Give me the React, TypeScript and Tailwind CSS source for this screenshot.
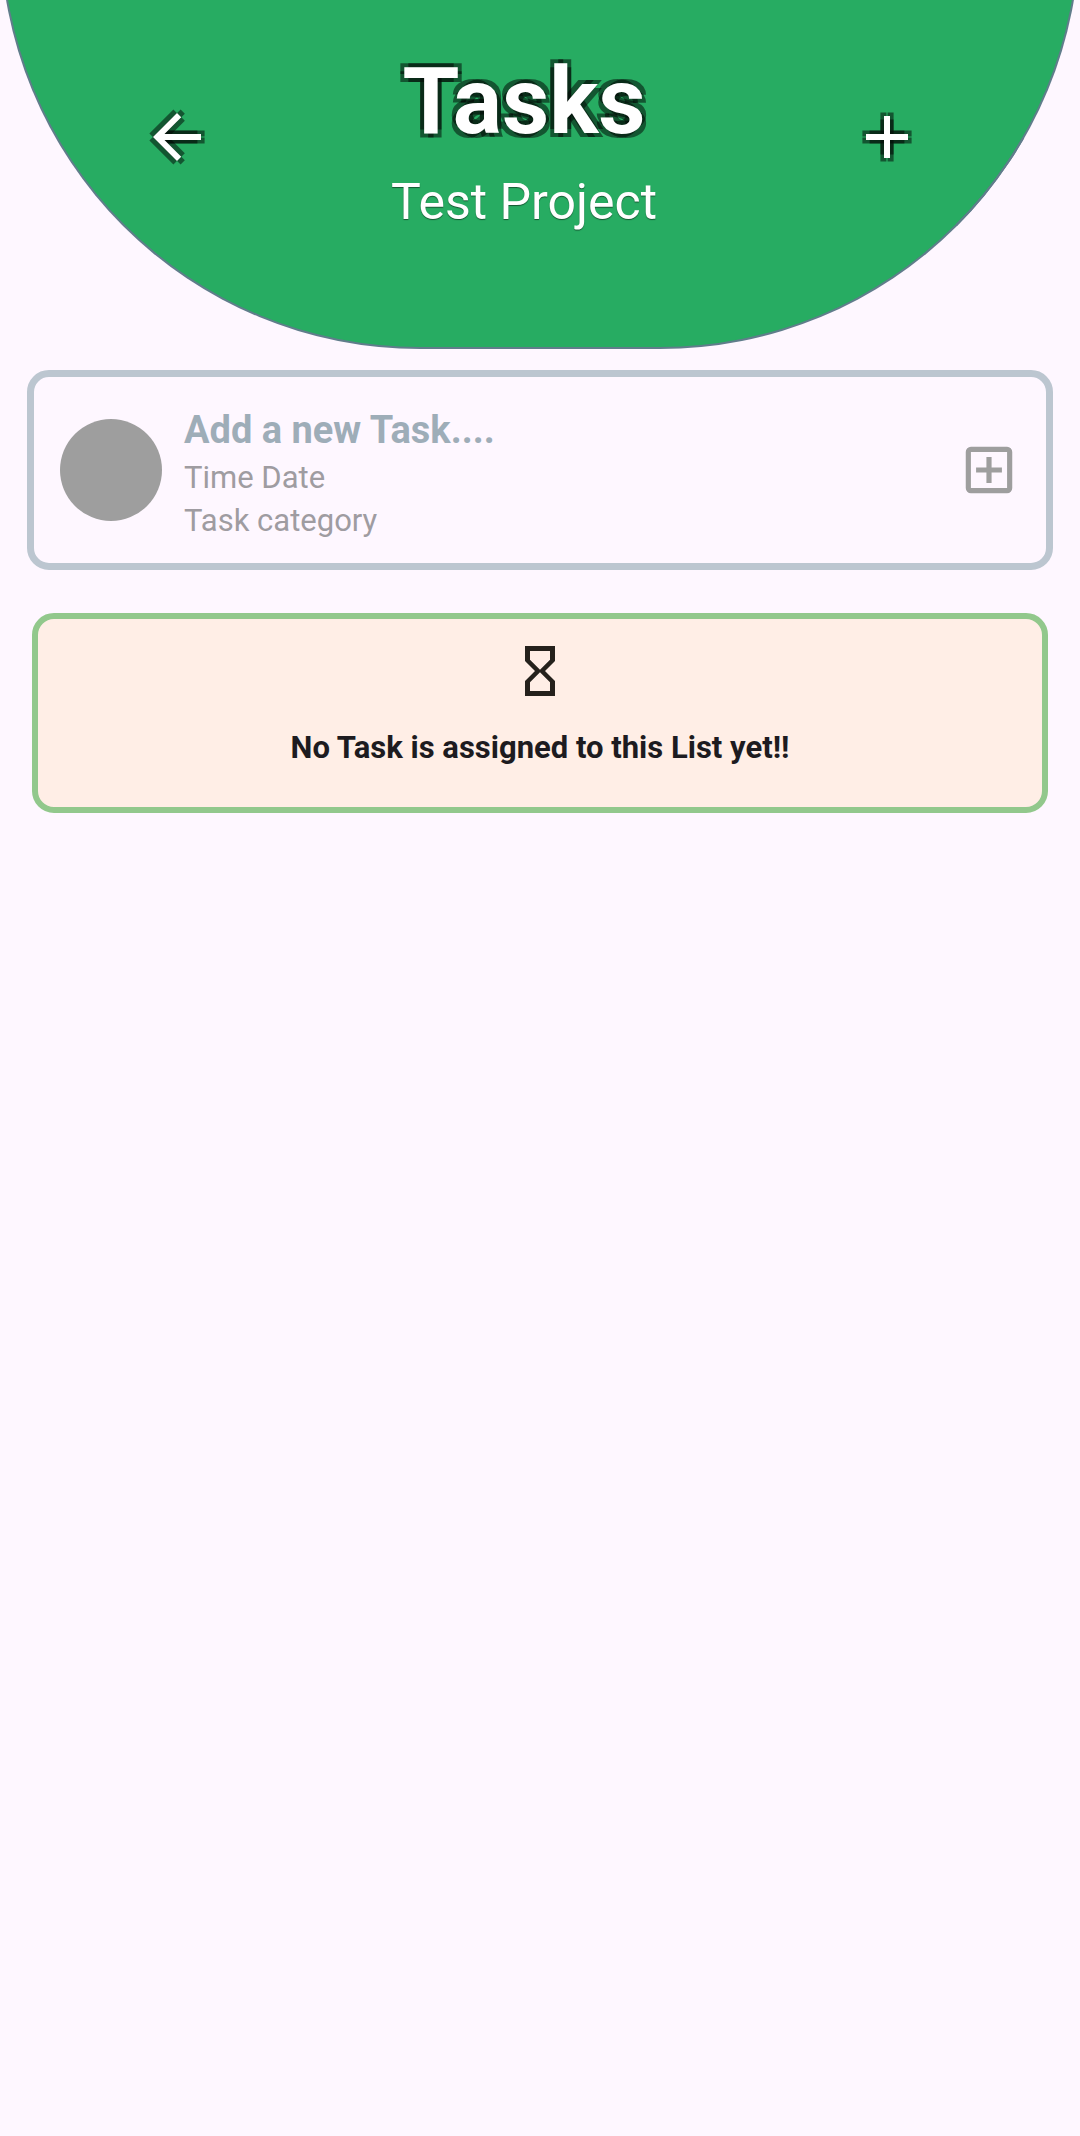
type OutlinedIconProps = { d: string };

/** White glyph with four translucent corner shadows. */
function OutlinedIcon({ d }: OutlinedIconProps) {
  return (
    <svg viewBox="0 0 72 72" className="size-[72px] overflow-visible" aria-hidden="true">
      <g fill="#000" fillOpacity="0.5">
        <path transform="translate(-3.6 -3.6) scale(3)" d={d} />
        <path transform="translate(3.6 -3.6) scale(3)" d={d} />
        <path transform="translate(3.6 3.6) scale(3)" d={d} />
        <path transform="translate(-3.6 3.6) scale(3)" d={d} />
      </g>
      <path fill="#fff" transform="scale(3)" d={d} />
    </svg>
  );
}

const BACK = "M20 11H7.83l5.59-5.59L12 4l-8 8 8 8 1.41-1.41L7.83 13H20v-2z";
const PLUS = "M19 13h-6v6h-2v-6H5v-2h6V5h2v6h6v2z";

function Header() {
  return (
    <header className="-mt-[72px] flex h-[421px] items-start justify-between rounded-b-[420px] border-2 border-[#607d8b] bg-[#27ac62] px-[139px] pt-[122px] text-white">
      <button type="button" aria-label="Back" className="mt-[49px]">
        <OutlinedIcon d={BACK} />
      </button>
      <div className="mr-4 text-center">
        <h1 className="text-[92px] leading-[100px] font-bold [text-shadow:-4px_-4px_0_#00000080,4px_-4px_0_#00000080,4px_4px_0_#00000080,-4px_4px_0_#00000080]">
          Tasks
        </h1>
        <p className="mt-5 text-[50px] leading-[60px] [text-shadow:0_1px_1px_#00000080]">Test Project</p>
      </div>
      <button type="button" aria-label="Add" className="mr-4 mt-[49px]">
        <OutlinedIcon d={PLUS} />
      </button>
    </header>
  );
}

function NewTaskCard() {
  return (
    <section className="mx-[27px] mt-[21px] flex h-[200px] items-center rounded-[22px] border-[7px] border-[#bcc6d0] pr-[26px] pl-[26px]">
      <div className="size-[102px] shrink-0 rounded-full bg-[#9e9e9e]" />
      <div className="ml-[22px] flex-1 pt-[5px] text-[31px] leading-[43px] text-[#9f9ca1]">
        <h2 className="text-[38px] leading-[52px] font-bold text-[#9eadb8]">Add a new Task....</h2>
        <p>Time Date</p>
        <p>Task category</p>
      </div>
      <button type="button" aria-label="Add a new task">
        <svg viewBox="0 0 24 24" className="size-[62px]" fill="#9e9e9e" aria-hidden="true">
          <path d="M19 3H5a2 2 0 0 0-2 2v14a2 2 0 0 0 2 2h14a2 2 0 0 0 2-2V5a2 2 0 0 0-2-2zm0 16H5V5h14v14zm-8-2h2v-4h4v-2h-4V7h-2v4H7v2h4z" />
        </svg>
      </button>
    </section>
  );
}

function EmptyState() {
  return (
    <section className="mx-8 mt-[43px] flex h-[200px] flex-col items-center rounded-[22px] border-[6px] border-[#92c88c] bg-[#ffeee6] pt-[22px] text-[#1d1b20]">
      <svg viewBox="0 0 24 24" className="size-[60px]" fill="#25211c" aria-hidden="true">
        <path d="M6 2v6l4 4-4 4v6h12v-6l-4-4 4-4V2H6zm10 14.5V20H8v-3.5l4-4 4 4zm-4-5-4-4V4h8v3.5l-4 4z" />
      </svg>
      <p className="mt-[27px] text-[31px] leading-[40px] font-bold">No Task is assigned to this List yet!!</p>
    </section>
  );
}

export default function App() {
  return (
    <main className="min-h-screen overflow-hidden bg-[#fef7ff] font-['Roboto',sans-serif]">
      <Header />
      <NewTaskCard />
      <EmptyState />
    </main>
  );
}
